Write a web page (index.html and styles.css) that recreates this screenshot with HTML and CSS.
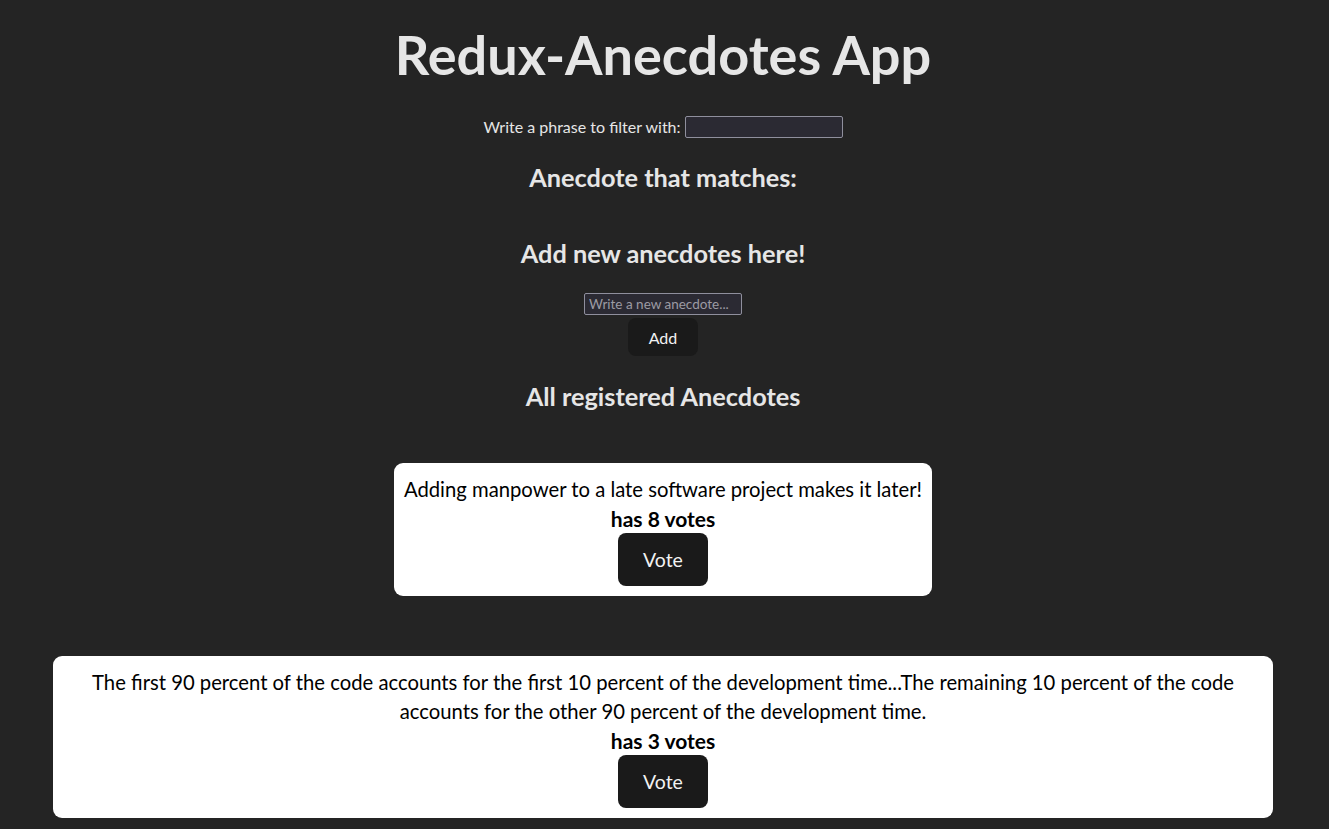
FILE: index.html
```html
<!DOCTYPE html>
<html lang="en">
<head>
<meta charset="utf-8">
<title>Redux-Anecdotes App</title>
<link rel="stylesheet" href="styles.css">
</head>
<body>
<div class="app">
  <h1 class="title">Redux-Anecdotes App</h1>
  <div class="filter">
    <label class="filter-label" for="filter">Write a phrase to filter with:</label>
    <input id="filter" class="field" type="text">
  </div>
  <h3 class="heading heading-match">Anecdote that matches:</h3>
  <h3 class="heading heading-add">Add new anecdotes here!</h3>
  <form class="new-form">
    <input class="field field-new" type="text" placeholder="Write a new anecdote...">
    <button class="add-btn" type="button">Add</button>
  </form>
  <h3 class="heading heading-all">All registered Anecdotes</h3>
  <div class="list">
    <div class="card">
      <div class="card-text">Adding manpower to a late software project makes it later!</div>
      <div class="card-votes">has 8 votes</div>
      <button class="vote-btn" type="button">Vote</button>
    </div>
    <div class="card">
      <div class="card-text">The first 90 percent of the code accounts for the first 10 percent of the development time...The remaining 10 percent of the code accounts for the other 90 percent of the development time.</div>
      <div class="card-votes">has 3 votes</div>
      <button class="vote-btn" type="button">Vote</button>
    </div>
  </div>
</div>
</body>
</html>
```

FILE: styles.css
```css
html, body {
  margin: 0;
  padding: 0;
}
body {
  background: #242424;
  color: rgba(255, 255, 255, 0.87);
  font-family: Lato, "Open Sans", "Noto Sans", sans-serif;
  min-height: 100vh;
}
.app {
  display: flex;
  flex-direction: column;
  align-items: center;
  text-align: center;
  padding: 0 56px 10px 53px;
}
.title {
  margin: 27px 0 0;
  font-size: 54px;
  line-height: 56px;
  font-weight: 700;
  color: #e6e6e6;
}
.filter {
  margin-top: 33px;
  display: flex;
  align-items: center;
  gap: 4px;
  height: 22px;
}
.filter-label {
  font-size: 16px;
  line-height: 22px;
  color: #e6e6e6;
}
.field {
  box-sizing: border-box;
  width: 158px;
  height: 22px;
  margin: 0;
  padding: 1px 4px;
  background: #2b2a33;
  border: 1px solid #8f8f9d;
  border-radius: 2px;
  color: #fbfbfe;
  font-family: Lato, "Open Sans", sans-serif;
  font-size: 13.5px;
}
.field::placeholder {
  color: #9c9ba3;
}
.heading {
  margin: 0;
  font-size: 25.3px;
  line-height: 30px;
  font-weight: 700;
  color: #e6e6e6;
}
.heading-match { margin-top: 24px; }
.heading-add { margin-top: 46px; }
.heading-all { margin-top: 25px; }
.new-form {
  margin-top: 25px;
  display: flex;
  flex-direction: column;
  align-items: center;
  gap: 3px;
}
.add-btn {
  box-sizing: border-box;
  height: 38px;
  padding: 0 20px;
  min-width: 70px;
  background: #1a1a1a;
  color: #f2f2f2;
  border: 1px solid transparent;
  border-radius: 8px;
  font-family: Lato, "Open Sans", sans-serif;
  font-size: 16px;
  cursor: pointer;
}
.list {
  margin-top: 52px;
  display: flex;
  flex-direction: column;
  align-items: center;
  gap: 60px;
  width: 100%;
}
.card {
  box-sizing: border-box;
  max-width: 1220px;
  background: #ffffff;
  color: #000000;
  border-radius: 9px;
  padding: 12px 10px 10px;
  font-size: 20.25px;
  line-height: 29px;
  display: flex;
  flex-direction: column;
  align-items: center;
}
.card-votes {
  font-weight: 700;
  font-size: 21px;
}
.vote-btn {
  box-sizing: border-box;
  height: 53px;
  width: 90px;
  background: #1a1a1a;
  color: #f2f2f2;
  border: 1px solid transparent;
  border-radius: 8px;
  font-family: Lato, "Open Sans", sans-serif;
  font-size: 19.5px;
  cursor: pointer;
}
```
